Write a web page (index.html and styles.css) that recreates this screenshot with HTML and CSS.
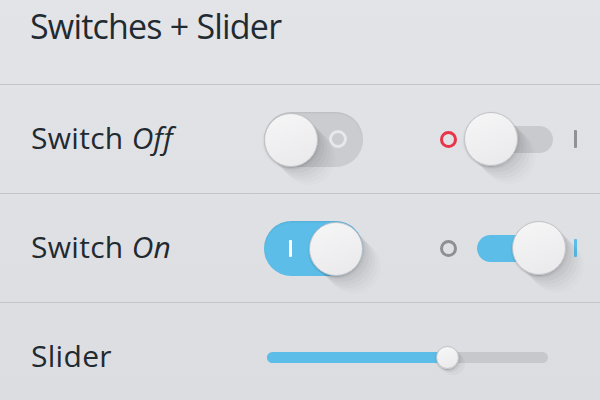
FILE: index.html
```html
<!DOCTYPE html>
<html lang="en">
<head>
    <meta charset="UTF-8">
    <title>Switches + Slider</title>
    <link rel="stylesheet" href="styles.css">
</head>
<body>
    <div class="header">
        <h1>Switches + Slider</h1>
    </div>

    <div class="row">
        <div class="label">Switch <em>Off</em></div>
        <div class="switch">
            <span class="mark ring"></span>
            <span class="knob"></span>
        </div>
        <div class="mini">
            <span class="dot red"></span>
            <div class="mini-switch">
                <span class="mini-track"></span>
                <span class="knob"></span>
            </div>
            <span class="bar"></span>
        </div>
    </div>

    <div class="row">
        <div class="label">Switch <em>On</em></div>
        <div class="switch on">
            <span class="mark line"></span>
            <span class="knob"></span>
        </div>
        <div class="mini">
            <span class="dot"></span>
            <div class="mini-switch on">
                <span class="mini-track"></span>
                <span class="knob"></span>
            </div>
            <span class="bar blue"></span>
        </div>
    </div>

    <div class="row">
        <div class="label">Slider</div>
        <div class="slider">
            <div class="fill" style="width: 64%"></div>
            <span class="thumb"></span>
        </div>
    </div>
</body>
</html>
```

FILE: styles.css
```css
body {
    margin: 0;
    font-family: "Open Sans", "Noto Sans", sans-serif;
    color: #1f2a31;
    background: linear-gradient(180deg, #e3e4e8 0%, #dcdde1 100%);
    height: 400px;
    overflow: hidden;
}
.header {
    height: 84px;
    border-bottom: 1px solid #c3c4c8;
    padding-left: 30px;
}
h1 {
    margin: 0;
    font-weight: 400;
    font-size: 34px;
    letter-spacing: -0.8px;
    line-height: 52px;
}
.row {
    height: 108px;
    border-bottom: 1px solid #c3c4c8;
    display: flex;
    align-items: center;
    padding-left: 31px;
}
.label {
    width: 233px;
    font-size: 30px;
    letter-spacing: 0.3px;
    margin-top: -4px;
}
.label em { font-style: italic; }

/* big switch */
.switch {
    position: relative;
    width: 99px;
    height: 55px;
    border-radius: 28px;
    background: #cbccd0;
    box-shadow: inset 0 1px 2px rgba(0,0,0,0.08);
    display: flex;
    align-items: center;
    justify-content: flex-end;
    padding: 0 16px;
    box-sizing: border-box;
}
.switch.on {
    background: #5bbde8;
    justify-content: flex-start;
    padding-left: 25px;
}
.knob {
    position: absolute;
    top: 0;
    left: 0;
    width: 54px;
    height: 54px;
    border-radius: 50%;
    background: linear-gradient(160deg, #f6f6f7 0%, #e9e9eb 100%);
    border: 1px solid #c2c3c7;
    box-sizing: border-box;
    box-shadow:
        0 1px 2px rgba(0,0,0,0.2),
        3px 3px 0 rgba(0,0,0,0.03),
        6px 6px 0 rgba(0,0,0,0.03),
        9px 9px 0 rgba(0,0,0,0.025),
        12px 12px 0 rgba(0,0,0,0.02),
        15px 15px 0 rgba(0,0,0,0.015),
        18px 18px 0 rgba(0,0,0,0.01);
}
.switch .knob { top: 1px; }
.switch.on .knob { left: auto; right: 0; }
.ring {
    width: 12px;
    height: 12px;
    border: 3px solid #e7e8eb;
    border-radius: 50%;
}
.line {
    width: 3px;
    height: 17px;
    background: #fff;
    border-radius: 1px;
}

/* small switch group */
.mini {
    display: flex;
    align-items: center;
    margin-left: 77px;
}
.dot {
    width: 11px;
    height: 11px;
    border: 3px solid #8e8f93;
    border-radius: 50%;
}
.dot.red { border-color: #e83348; }
.mini-switch {
    position: relative;
    width: 102px;
    height: 54px;
    margin: 0 8px 0 7px;
    display: flex;
    align-items: center;
}
.mini-track {
    margin: 0 13px;
    flex: 1;
    height: 27px;
    border-radius: 14px;
    background: #c9cace;
}
.mini-switch.on .mini-track { background: linear-gradient(90deg, #5bbde8 60%, #c9cace 60%); }
.mini-switch.on .knob { left: auto; right: 0; }
.bar {
    width: 3px;
    height: 18px;
    background: #909195;
    border-radius: 1px;
}
.bar.blue { background: #5bbde8; }

/* slider */
.slider {
    position: relative;
    width: 281px;
    height: 11px;
    border-radius: 6px;
    background: #c7c8cc;
    margin: 0 0 0 3px;
}
.fill {
    height: 100%;
    border-radius: 6px;
    background: #5bbde8;
}
.thumb {
    position: absolute;
    top: -6px;
    left: 169px;
    width: 23px;
    height: 23px;
    border-radius: 50%;
    background: linear-gradient(160deg, #f8f8f9, #e9e9eb);
    border: 1px solid #c2c3c7;
    box-sizing: border-box;
    box-shadow: 0 1px 2px rgba(0,0,0,0.2), 3px 3px 0 rgba(0,0,0,0.04), 6px 6px 0 rgba(0,0,0,0.03);
}
```
